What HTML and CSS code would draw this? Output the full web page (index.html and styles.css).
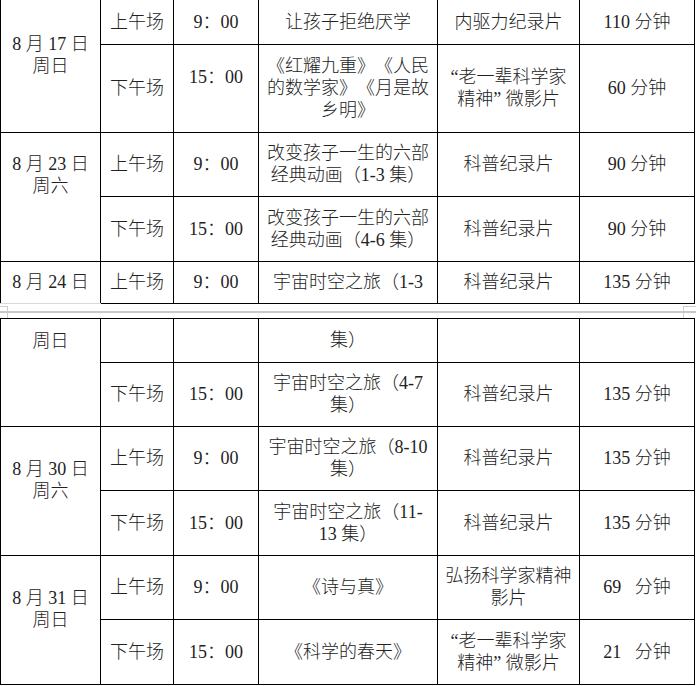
FILE: index.html
```html
<!DOCTYPE html>
<html lang="zh-CN">
<head>
<meta charset="utf-8">
<title>观影安排</title>
<link rel="stylesheet" href="styles.css">
</head>
<body>
<div class="sheet">
  <table class="schedule first-page">
    <colgroup>
      <col class="c-date"><col class="c-session"><col class="c-time"><col class="c-title"><col class="c-type"><col class="c-len">
    </colgroup>
    <tr class="h44 top-row">
      <td rowspan="2" class="gap1">8 月 17 日<br>周日</td>
      <td>上午场</td>
      <td>9：00</td>
      <td>让孩子拒绝厌学</td>
      <td>内驱力纪录片</td>
      <td>110 分钟</td>
    </tr>
    <tr class="h88">
      <td>下午场</td>
      <td class="gap1">15：00</td>
      <td>《红耀九重》《人民<br>的数学家》《月是故<br>乡明》</td>
      <td>“老一辈科学家<br>精神” 微影片</td>
      <td>60 分钟</td>
    </tr>
    <tr class="h64">
      <td rowspan="2" class="gap2">8 月 23 日<br>周六</td>
      <td>上午场</td>
      <td>9：00</td>
      <td>改变孩子一生的六部<br>经典动画（1-3 集）</td>
      <td>科普纪录片</td>
      <td>90 分钟</td>
    </tr>
    <tr class="h65">
      <td>下午场</td>
      <td>15：00</td>
      <td>改变孩子一生的六部<br>经典动画（4-6 集）</td>
      <td>科普纪录片</td>
      <td>90 分钟</td>
    </tr>
    <tr class="h42">
      <td class="split-bottom">8 月 24 日</td>
      <td>上午场</td>
      <td>9：00</td>
      <td>宇宙时空之旅（1-3</td>
      <td>科普纪录片</td>
      <td>135 分钟</td>
    </tr>
  </table>

  <div class="page-break">
    <div class="break-marks">
      <span class="mark mark-left"></span>
      <span class="mark mark-right"></span>
    </div>
    <div class="break-band"></div>
  </div>

  <table class="schedule second-page">
    <colgroup>
      <col class="c-date"><col class="c-session"><col class="c-time"><col class="c-title"><col class="c-type"><col class="c-len">
    </colgroup>
    <tr class="h44">
      <td rowspan="2" class="date-cont">周日</td>
      <td></td>
      <td></td>
      <td>集）</td>
      <td></td>
      <td></td>
    </tr>
    <tr class="h64">
      <td>下午场</td>
      <td>15：00</td>
      <td>宇宙时空之旅（4-7<br>集）</td>
      <td>科普纪录片</td>
      <td>135 分钟</td>
    </tr>
    <tr class="h64">
      <td rowspan="2" class="gap1">8 月 30 日<br>周六</td>
      <td>上午场</td>
      <td>9：00</td>
      <td>宇宙时空之旅（8-10<br>集）</td>
      <td>科普纪录片</td>
      <td>135 分钟</td>
    </tr>
    <tr class="h65">
      <td>下午场</td>
      <td>15：00</td>
      <td>宇宙时空之旅（11-<br>13 集）</td>
      <td>科普纪录片</td>
      <td>135 分钟</td>
    </tr>
    <tr class="h64">
      <td rowspan="2" class="gap1">8 月 31 日<br>周日</td>
      <td>上午场</td>
      <td>9：00</td>
      <td>《诗与真》</td>
      <td>弘扬科学家精神<br>影片</td>
      <td>69&ensp; 分钟</td>
    </tr>
    <tr class="h65">
      <td>下午场</td>
      <td>15：00</td>
      <td>《科学的春天》</td>
      <td>“老一辈科学家<br>精神” 微影片</td>
      <td>21&ensp; 分钟</td>
    </tr>
  </table>
</div>
</body>
</html>
```

FILE: styles.css
```css
html, body {
  margin: 0;
  padding: 0;
  background: #ffffff;
}

.sheet {
  width: 696px;
  height: 686px;
  overflow: hidden;
  background: #ffffff;
}

.schedule {
  border-collapse: collapse;
  table-layout: fixed;
  width: 694px;
  font-family: "Liberation Serif", "Noto Sans CJK SC", serif;
  font-size: 18px;
  font-weight: 300;
  line-height: 22px;
  color: #222222;
  text-spacing-trim: space-all;
}

.c-date { width: 100px; }
.c-session { width: 73px; }
.c-time { width: 85px; }
.c-title { width: 179px; }
.c-type { width: 142px; }
.c-len { width: 115px; }

.schedule td {
  border: 1px solid #000000;
  padding: 0 2px;
  text-align: center;
  vertical-align: middle;
  white-space: nowrap;
}

.top-row td {
  border-top: none;
}

.h42 { height: 42px; }
.h44 { height: 44px; }
.h64 { height: 64px; }
.h65 { height: 65px; }
.h88 { height: 88px; }

.schedule td.gap1 {
  padding-bottom: 22px;
}

.schedule td.gap2 {
  padding-bottom: 44px;
}

.schedule td.date-cont {
  vertical-align: top;
  padding-top: 11px;
}

.schedule td.split-bottom {
  border-bottom: 1px solid #d9d9d9;
}

.page-break {
  position: relative;
  height: 14px;
}

.break-marks {
  display: flex;
  justify-content: space-between;
  padding-top: 2px;
}

.mark {
  display: block;
  height: 11px;
  border-top: 1px solid #cfcfcf;
}

.mark-left {
  width: 7px;
  border-right: 1px solid #cfcfcf;
}

.mark-right {
  width: 12px;
  border-left: 1px solid #cfcfcf;
}

.break-band {
  position: absolute;
  left: 0;
  right: 0;
  top: 7px;
  height: 2px;
  background: #c8c8c8;
}
```
